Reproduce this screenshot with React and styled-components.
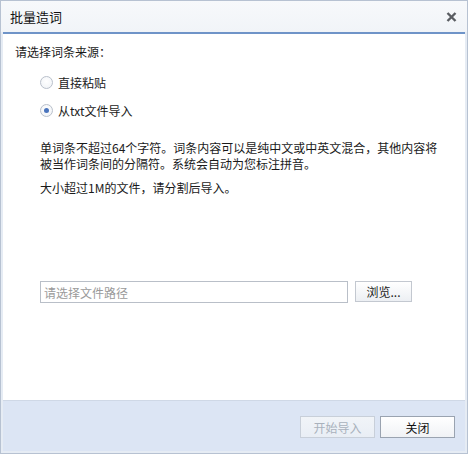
import React from "react";
import styled, { createGlobalStyle } from "styled-components";

const Global = createGlobalStyle`
  html, body { margin: 0; padding: 0; background: #ffffff; }
  body { font-family: "Noto Sans CJK SC", "Noto Sans", sans-serif; }
  * { box-sizing: border-box; }
`;

const Frame = styled.div`
  width: 468px;
  height: 454px;
  border: 1px solid #b7c2d2;
  background: #e6ecf4;
  padding: 0 2px 2px;
  display: flex;
  flex-direction: column;
  color: #1a1a1a;
  font-size: 12px;
`;

const TitleBar = styled.div`
  height: 31px;
  margin: 0 -2px;
  padding: 0 9px 0 9px;
  display: flex;
  align-items: center;
  justify-content: space-between;
  background: linear-gradient(#f7f9fb, #f1f4f8);
`;

const Title = styled.span`
  font-size: 13px;
  line-height: 16px;
  color: #111;
`;

const CloseBtn = styled.button`
  border: 0;
  background: none;
  padding: 0;
  width: 14px;
  height: 14px;
  display: flex;
  align-items: center;
  justify-content: center;
`;

const Body = styled.div`
  height: 368px;
  border-top: 2px solid #6f94c8;
  background: #fff;
  padding: 10px 0 0 12px;
`;

const SourceLabel = styled.div`
  line-height: 16px;
`;

const RadioGroup = styled.div`
  margin: 12px 0 0 25px;
  display: flex;
  flex-direction: column;
  gap: 8px;
`;

const RadioRow = styled.label`
  height: 20px;
  display: flex;
  align-items: center;
  gap: 5px;
`;

const RadioDot = styled.span`
  width: 13px;
  height: 13px;
  border-radius: 50%;
  border: 1px solid #b9c0cb;
  background: radial-gradient(circle at 50% 40%, #ffffff, #eef1f5);
  display: flex;
  align-items: center;
  justify-content: center;
  &::after {
    content: "";
    width: 5px;
    height: 5px;
    border-radius: 50%;
    background: #4a74bd;
    display: ${(p) => (p.$checked ? "block" : "none")};
  }
`;

const Notes = styled.div`
  margin: 20px 0 0 25px;
  line-height: 16px;
  white-space: nowrap;
`;

const NoteP = styled.p`
  margin: ${(p) => (p.$gap ? "8px" : "0")} 0 0;
`;

const PathRow = styled.div`
  margin: 85px 0 0 25px;
  display: flex;
  align-items: flex-start;
  gap: 7px;
`;

const PathInput = styled.input`
  width: 308px;
  height: 22px;
  border: 1px solid #b9bfc8;
  padding: 0 3px;
  font-family: inherit;
  font-size: 12px;
  color: #333;
  background: #fff;
  outline: none;
  &::placeholder { color: #9a9a9a; }
`;

const BrowseBtn = styled.button`
  width: 57px;
  height: 21px;
  border: 1px solid #c3c8d0;
  background: linear-gradient(#ffffff, #eceff3);
  font-family: inherit;
  font-size: 12px;
  color: #1a1a1a;
  padding: 0;
`;

const Footer = styled.div`
  flex: 1;
  background: #dce5f4;
  border-top: 1px solid #cfd8e6;
  display: flex;
  justify-content: flex-end;
  align-items: flex-start;
  gap: 5px;
  padding: 15px 10px 0 0;
`;

const FootBtn = styled.button`
  width: 75px;
  height: 22px;
  font-family: inherit;
  font-size: 12px;
  padding: 0;
  border: 1px solid ${(p) => (p.disabled ? "#c8cfd9" : "#9aa3b0")};
  color: ${(p) => (p.disabled ? "#a9b1bc" : "#111")};
  background: ${(p) =>
    p.disabled
      ? "linear-gradient(#f1f4f8, #e9eef5)"
      : "linear-gradient(#ffffff, #f0f2f5)"};
`;

export default function App() {
  return (
    <>
      <Global />
      <Frame>
        <TitleBar>
          <Title>批量造词</Title>
          <CloseBtn aria-label="关闭">
            <svg width="11" height="10" viewBox="0 0 11 10">
              <path d="M1.5 1 L9.5 9 M9.5 1 L1.5 9" stroke="#5a5d62" strokeWidth="2.4" />
            </svg>
          </CloseBtn>
        </TitleBar>
        <Body>
          <SourceLabel>请选择词条来源：</SourceLabel>
          <RadioGroup>
            <RadioRow>
              <RadioDot />
              直接粘贴
            </RadioRow>
            <RadioRow>
              <RadioDot $checked />
              从txt文件导入
            </RadioRow>
          </RadioGroup>
          <Notes>
            <NoteP>
              单词条不超过64个字符。词条内容可以是纯中文或中英文混合，其他内容将
              <br />
              被当作词条间的分隔符。系统会自动为您标注拼音。
            </NoteP>
            <NoteP $gap>大小超过1M的文件，请分割后导入。</NoteP>
          </Notes>
          <PathRow>
            <PathInput placeholder="请选择文件路径" />
            <BrowseBtn>浏览...</BrowseBtn>
          </PathRow>
        </Body>
        <Footer>
          <FootBtn disabled>开始导入</FootBtn>
          <FootBtn>关闭</FootBtn>
        </Footer>
      </Frame>
    </>
  );
}
